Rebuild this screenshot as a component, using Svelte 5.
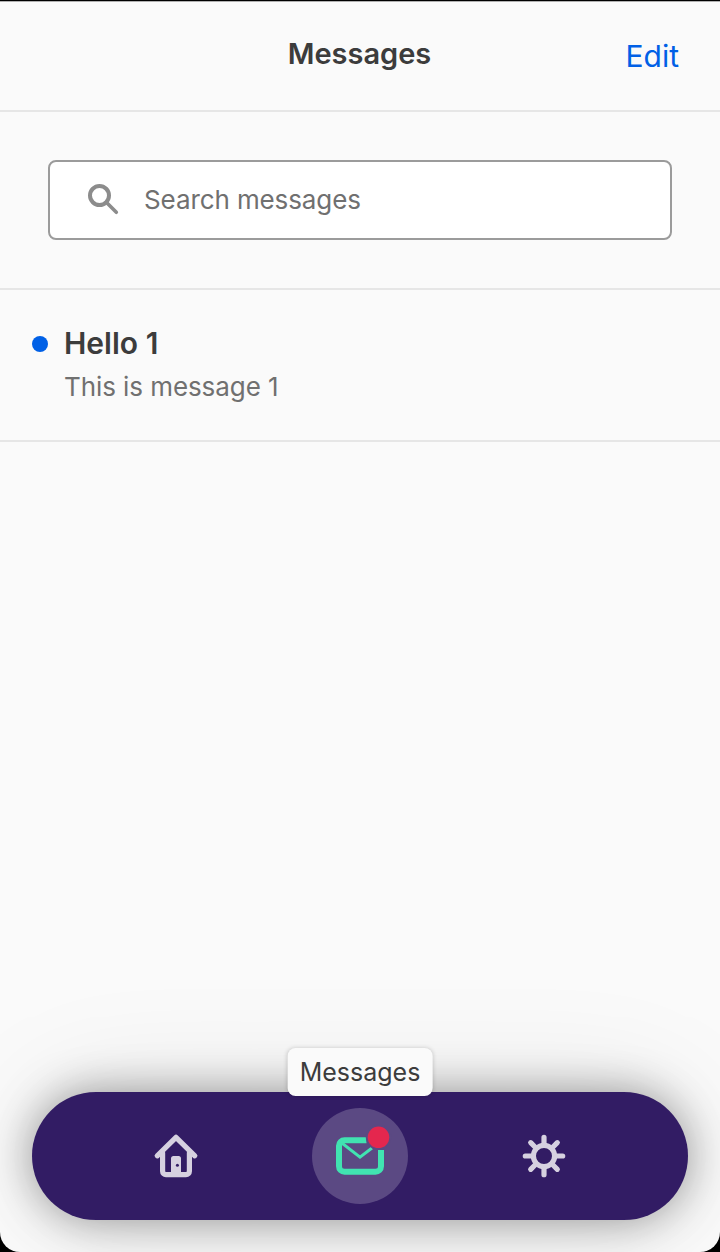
<script>
  let query = $state('');
  const messages = [{ title: 'Hello 1', body: 'This is message 1' }];
</script>

<main class="screen">
  <header>
    <h1>Messages</h1>
    <button class="edit">Edit</button>
  </header>

  <section class="search">
    <label class="field">
      <svg width="32" height="32" viewBox="0 0 32 32" fill="none" stroke="#8c8c8c">
        <circle cx="12.5" cy="11.5" r="9.5" stroke-width="4" />
        <path d="M19.3 18.3 29.3 28.3" stroke-width="3.6" stroke-linecap="round" />
      </svg>
      <input type="text" placeholder="Search messages" bind:value={query} />
    </label>
  </section>

  <ul>
    {#each messages as message}
      <li>
        <span class="dot"></span>
        <div>
          <h2>{message.title}</h2>
          <p>{message.body}</p>
        </div>
      </li>
    {/each}
  </ul>

  <nav>
    <button class="tab" aria-label="Home">
      <svg width="48" height="48" viewBox="0 0 48 48" fill="none" stroke="#d6d1e0" stroke-linecap="round" stroke-linejoin="round">
        <path d="M5.2 23.8 24 5.3l18.8 18.5" stroke-width="5.2" />
        <path d="M10.6 21v18.2a3.4 3.4 0 0 0 3.4 3.4h20a3.4 3.4 0 0 0 3.4-3.4V21" stroke-width="5.2" />
        <path d="M19 41V26.5a2.5 2.5 0 0 1 2.5-2.5h5a2.5 2.5 0 0 1 2.5 2.5V41Z" fill="#d6d1e0" stroke="none" />
        <circle cx="25.4" cy="33.3" r="1.5" fill="#321c64" stroke="none" />
      </svg>
    </button>
    <button class="tab active" aria-label="Messages">
      <svg width="56" height="56" viewBox="0 0 56 56" fill="none" stroke="#41e3b1">
        <path d="M34.5 12.2H12.5A5.5 5.5 0 0 0 7 17.7v20.5a5.5 5.5 0 0 0 5.5 5.5h31a5.5 5.5 0 0 0 5.5-5.5V22" stroke-width="6" />
        <path d="M9.5 14.8 28 29.2 40 20" stroke-width="3" />
        <circle cx="46.5" cy="9.3" r="12.7" fill="#5b4983" stroke="none" />
        <circle cx="46.5" cy="9.3" r="10.8" fill="#e4274e" stroke="none" />
      </svg>
      <span class="tip">Messages</span>
    </button>
    <button class="tab" aria-label="Settings">
      <svg width="48" height="48" viewBox="0 0 48 48" fill="none" stroke="#d6d1e0" stroke-linecap="round">
        <circle cx="24" cy="24" r="10.6" stroke-width="5.2" />
        <path d="M24 5.3v6M24 36.7v6M5.3 24h6M36.7 24h6M10.7 10.7l4.3 4.3M33 33l4.3 4.3M10.7 37.3l4.3-4.3M33 15l4.3-4.3" stroke-width="5.2" />
      </svg>
    </button>
  </nav>
</main>

<style>
  :global(body) {
    margin: 0;
    background: #000;
  }
  * {
    box-sizing: border-box;
  }
  .screen {
    display: flex;
    flex-direction: column;
    height: 1251px;
    margin-top: 1px;
    overflow: hidden;
    border-top: 1px solid #b0b0b0;
    border-radius: 0 0 20px 20px;
    background: #fafafa;
    color: #3c3c3c;
    font-family: Inter, sans-serif;
  }
  svg {
    overflow: visible;
  }
  h1, h2, p, ul {
    margin: 0;
    padding: 0;
    font-weight: 400;
  }
  button {
    padding: 0;
    border: 0;
    background: none;
    font: inherit;
  }
  header {
    display: grid;
    grid-template-columns: 1fr auto 1fr;
    align-items: center;
    height: 110px;
    padding: 0 40px;
    border-bottom: 2px solid #e6e6e6;
  }
  h1 {
    grid-column: 2;
    padding: 0 1px 4px 0;
    font: 600 29px/40px Inter, sans-serif;
    letter-spacing: 0;
  }
  .edit {
    justify-self: end;
    padding-right: 1px;
    color: #0060e6;
    font-size: 30px;
    line-height: 40px;
  }
  .search {
    height: 178px;
    padding: 48px;
    border-bottom: 2px solid #e6e6e6;
  }
  .field {
    display: flex;
    align-items: center;
    gap: 25px;
    height: 80px;
    padding-left: 37px;
    border: 2px solid #9b9b9b;
    border-radius: 8px;
    background: #fff;
  }
  input {
    flex: 1;
    min-width: 0;
    padding: 0;
    border: 0;
    outline: 0;
    background: transparent;
    font: 400 26px/36px Inter, sans-serif;
    letter-spacing: -0.1px;
  }
  input::placeholder {
    color: #707070;
    opacity: 1;
  }
  li {
    display: flex;
    gap: 16px;
    height: 152px;
    padding: 33px 32px;
    border-bottom: 2px solid #e6e6e6;
  }
  .dot {
    width: 16px;
    height: 16px;
    margin-top: 13px;
    border-radius: 50%;
    background: #0060e6;
  }
  h2 {
    font-size: 30px;
    font-weight: 600;
    line-height: 40px;
  }
  p {
    margin-top: 6px;
    color: #707070;
    font-size: 26px;
    line-height: 36px;
    letter-spacing: -0.08px;
  }
  nav {
    display: flex;
    align-items: center;
    justify-content: space-between;
    height: 128px;
    margin: auto 32px 32px;
    padding: 0 96px;
    border-radius: 64px;
    background: #321c64;
    box-shadow: 0 0 44px rgba(0, 0, 0, 0.38), 0 0 120px rgba(0, 0, 0, 0.1);
  }
  .tab {
    position: relative;
    display: grid;
    place-items: center;
    width: 96px;
    height: 96px;
    border-radius: 50%;
  }
  .active {
    background: #5b4983;
  }
  .tip {
    position: absolute;
    top: -60px;
    left: 50%;
    padding: 6px 12px;
    transform: translateX(-50%);
    border-radius: 8px;
    background: #fafafa;
    color: #3c3c3c;
    font-size: 25px;
    line-height: 36px;
    box-shadow: 0 0 4px rgba(0, 0, 0, 0.18);
  }
</style>
